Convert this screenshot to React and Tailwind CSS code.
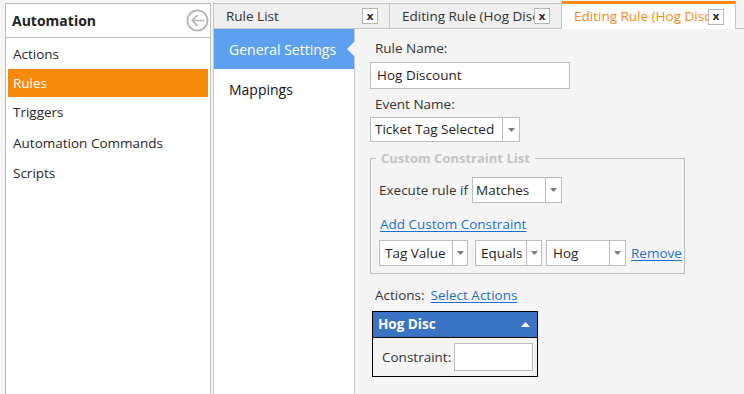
import React from "react";

const font = { fontFamily: '"Open Sans", "Noto Sans", sans-serif' };

function Arrow() {
  return (
    <svg width="7" height="4" viewBox="0 0 7 4" className="block">
      <path d="M0 0 L7 0 L3.5 4 Z" fill="#7a7a7a" />
    </svg>
  );
}

function Select({ label, w, arrowW, pl }) {
  return (
    <div
      className="flex h-full border border-[#bcbcbc] bg-white shrink-0"
      style={{ width: w }}
    >
      <div className="flex-1 flex items-center whitespace-nowrap overflow-hidden text-[#1f1f1f]" style={{ paddingLeft: pl }}>
        {label}
      </div>
      <div className="border-l border-[#bcbcbc] flex items-center justify-center shrink-0" style={{ width: arrowW }}>
        <Arrow />
      </div>
    </div>
  );
}

function CloseBox() {
  return (
    <div className="w-[16px] h-[16px] shrink-0 border border-[#b5b5b5] bg-white flex items-center justify-center text-[11px] font-bold leading-none text-[#2b2b3b]" style={{ fontFamily: '"DejaVu Sans", sans-serif' }}>
      x
    </div>
  );
}

function Tab({ label, active, w }) {
  return (
    <div
      className={
        "flex items-center pl-[12px] pr-[11px] shrink-0 border-r border-[#c3c3c3] " +
        (active
          ? "h-[28px] bg-white border-t-[3px] border-t-[#f7890e] text-[#f7890e] -mb-[1px] relative"
          : "h-[25px] bg-[#efefef] border-t border-t-[#c3c3c3] text-[#333333]")
      }
      style={{ width: w }}
    >
      <div className="flex-1 overflow-hidden whitespace-nowrap text-[13.5px]">{label}</div>
      <CloseBox />
    </div>
  );
}

export default function App() {
  return (
    <div className="w-[744px] h-[394px] bg-[#f4f4f4] overflow-hidden flex text-[13.5px] text-[#262626]" style={font}>
      {/* Left panel */}
      <div className="ml-[5px] mt-[3px] w-[206px] h-[420px] shrink-0 bg-white border border-[#bdbdbd] flex flex-col">
        <div className="h-[34px] flex items-center justify-between pl-[6px] pr-[1px] border-b border-[#bdbdbd]">
          <span className="font-bold text-[14px] text-[#222]">Automation</span>
          <svg width="23" height="23" viewBox="0 0 24 24" fill="none" stroke="#b3b3b3" strokeWidth="1.8">
            <circle cx="12" cy="12" r="10.5" />
            <path d="M18 12 H6.5 M11.5 7 L6.5 12 L11.5 17" strokeLinecap="round" strokeLinejoin="round" />
          </svg>
        </div>
        <div className="flex flex-col pt-[1px]">
          <div className="h-[30px] flex items-center pl-[7px]">Actions</div>
          <div className="h-[28px] mx-[2px] flex items-center pl-[5px] bg-[#f68a0d] text-white">Rules</div>
          <div className="h-[31px] flex items-center pl-[7px]">Triggers</div>
          <div className="h-[30px] flex items-center pl-[7px]">Automation Commands</div>
          <div className="h-[30px] flex items-center pl-[7px]">Scripts</div>
        </div>
      </div>

      {/* Right region */}
      <div className="ml-[2px] flex-1 flex flex-col">
        {/* tab strip */}
        <div className="h-[29px] flex items-end border-b border-[#c3c3c3] shrink-0">
          <div className="flex items-end border-l border-[#c3c3c3] h-[26px]">
            <Tab label="Rule List" w={176} />
          </div>
          <Tab label="Editing Rule (Hog Discount)" w={172} />
          <Tab label="Editing Rule (Hog Discount)" w={174} active />
        </div>

        {/* content */}
        <div className="flex flex-1">
          <div className="w-[142px] shrink-0 bg-white border-l border-r border-[#c9c9c9] flex flex-col">
            <div className="h-[40px] bg-[#5ea0f0] text-white flex items-center pl-[15px] relative text-[14px]">
              General Settings
              <div className="absolute right-[-1px] top-[12px] w-0 h-0 border-y-[8px] border-y-transparent border-r-[8px] border-r-[#f4f4f4]" />
            </div>
            <div className="h-[40px] flex items-center pl-[15px] text-[14px] text-[#111]">Mappings</div>
          </div>

          <div className="flex-1 flex flex-col pl-[15px] pt-[10px]">
            <div className="pl-[5px] h-[18px] flex items-center text-[#333]">Rule Name:</div>
            <div className="mt-[5px] w-[200px] h-[27px] border border-[#bcbcbc] bg-white flex items-center pl-[6px] text-[#1f1f1f]">
              Hog Discount
            </div>
            <div className="mt-[6px] pl-[5px] h-[18px] flex items-center text-[#333]">Event Name:</div>
            <div className="mt-[4px] h-[25px] flex">
              <Select label="Ticket Tag Selected" w={150} arrowW={17} pl={4} />
            </div>

            <fieldset className="mt-[8px] w-[315px] border border-[#bdbdbd] pl-[8px] pb-[7px]">
              <legend className="-ml-[3px] px-[5px] font-bold text-[#c4c4c4] text-[13px] leading-[16px]">
                Custom Constraint List
              </legend>
              <div className="mt-[11px] h-[26px] flex items-center">
                <span className="text-[#333] mr-[4px]">Execute rule if</span>
                <Select label="Matches" w={90} arrowW={16} pl={3} />
              </div>
              <div className="mt-[12px] h-[18px] flex items-center">
                <span className="text-[#1d6fd1] underline underline-offset-2 ml-[1px]">Add Custom Constraint</span>
              </div>
              <div className="mt-[7px] h-[26px] flex items-center">
                <Select label="Tag Value" w={89} arrowW={15} pl={5} />
                <div className="w-[7px]" />
                <Select label="Equals" w={67} arrowW={15} pl={5} />
                <div className="w-[4px]" />
                <Select label="Hog" w={80} arrowW={16} pl={6} />
                <span className="ml-[5px] text-[#1d6fd1] underline underline-offset-2">Remove</span>
              </div>
            </fieldset>

            <div className="mt-[12px] pl-[5px] h-[18px] flex items-center">
              <span className="text-[#333]">Actions:</span>
              <span className="ml-[6px] text-[#1d6fd1] underline underline-offset-2">Select Actions</span>
            </div>
            <div className="mt-[7px] ml-[2px] w-[166px] border border-black">
              <div className="h-[26px] bg-[#3a72c4] border-b border-black flex items-center justify-between pl-[5px] pr-[7px]">
                <span className="font-bold text-white text-[13.5px]">Hog Disc</span>
                <svg width="9" height="5" viewBox="0 0 9 5"><path d="M0 5 L9 5 L4.5 0 Z" fill="#fff" /></svg>
              </div>
              <div className="h-[38px] flex items-center pl-[9px] pr-[4px] bg-[#f4f4f4]">
                <span className="text-[#333]">Constraint:</span>
                <div className="ml-[3px] w-[80px] h-[28px] border border-[#bcbcbc] bg-white" />
              </div>
            </div>
          </div>
        </div>
      </div>
    </div>
  );
}
